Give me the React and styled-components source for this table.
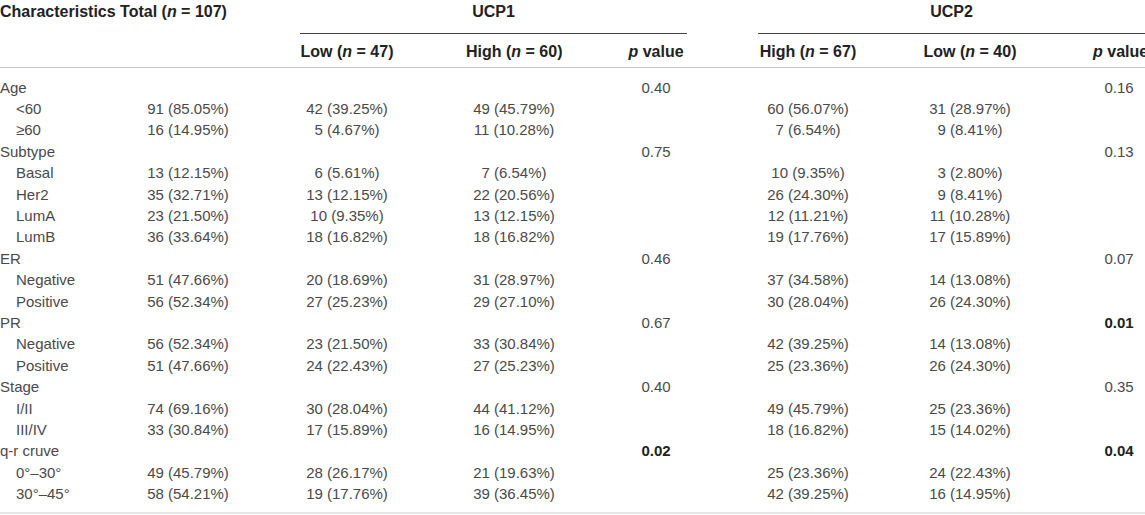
import React from "react";
import styled, { createGlobalStyle } from "styled-components";

const GlobalStyle = createGlobalStyle`
  html, body {
    margin: 0;
    padding: 0;
    background: #ffffff;
  }
  body {
    font-family: "Liberation Sans", Arial, Helvetica, sans-serif;
  }
`;

// label | total | gap | low | gap | high | gap | p | gap | high | gap | low | gap | p
const COLUMNS =
  "140px 96px 64px 94px 72px 96px 63px 62px 71px 100px 62px 100px 73px 52px";

const Table = styled.div`
  width: 1145px;
  overflow: hidden;
  color: #4a4a4a;
`;

const HeadRow = styled.div`
  display: grid;
  grid-template-columns: ${COLUMNS};
  height: ${(p) => p.$height}px;
  box-sizing: border-box;
  align-items: ${(p) => (p.$top ? "start" : "center")};
  padding-top: ${(p) => p.$padTop || 0}px;
  border-bottom: ${(p) => (p.$rule ? "1px solid #c9c9c9" : "none")};
`;

const HeadCell = styled.div`
  grid-column: ${(p) => p.$col};
  grid-row: 1;
  font-size: 16px;
  font-weight: 700;
  color: #222;
  line-height: 18px;
  white-space: nowrap;
  text-align: ${(p) => p.$align || "center"};
  padding-top: ${(p) => p.$padTop || 0}px;
  i {
    font-style: italic;
  }
`;

const Group = styled(HeadCell)`
  align-self: stretch;
  padding-top: 3px;
  border-bottom: 1.5px solid #444;
  box-sizing: border-box;
`;

const Body = styled.div`
  padding: 9px 0 7px;
  border-bottom: 2px solid #e6e6e6;
`;

const Row = styled.div`
  display: grid;
  grid-template-columns: ${COLUMNS};
  grid-template-rows: 21.4px;
  align-items: center;
`;

const Cell = styled.div`
  grid-column: ${(p) => p.$col};
  grid-row: 1;
  font-size: 15px;
  line-height: 18px;
  white-space: nowrap;
  text-align: ${(p) => p.$align || "center"};
  padding-left: ${(p) => (p.$indent ? 16 : 0)}px;
  font-weight: ${(p) => (p.$bold ? 700 : 400)};
  color: ${(p) => (p.$bold ? "#222" : "inherit")};
`;

const rows = [
  { label: "Age", p1: "0.40", p2: "0.16" },
  { label: "<60", v: ["91 (85.05%)", "42 (39.25%)", "49 (45.79%)", "60 (56.07%)", "31 (28.97%)"] },
  { label: "≥60", v: ["16 (14.95%)", "5 (4.67%)", "11 (10.28%)", "7 (6.54%)", "9 (8.41%)"] },
  { label: "Subtype", p1: "0.75", p2: "0.13" },
  { label: "Basal", v: ["13 (12.15%)", "6 (5.61%)", "7 (6.54%)", "10 (9.35%)", "3 (2.80%)"] },
  { label: "Her2", v: ["35 (32.71%)", "13 (12.15%)", "22 (20.56%)", "26 (24.30%)", "9 (8.41%)"] },
  { label: "LumA", v: ["23 (21.50%)", "10 (9.35%)", "13 (12.15%)", "12 (11.21%)", "11 (10.28%)"] },
  { label: "LumB", v: ["36 (33.64%)", "18 (16.82%)", "18 (16.82%)", "19 (17.76%)", "17 (15.89%)"] },
  { label: "ER", p1: "0.46", p2: "0.07" },
  { label: "Negative", v: ["51 (47.66%)", "20 (18.69%)", "31 (28.97%)", "37 (34.58%)", "14 (13.08%)"] },
  { label: "Positive", v: ["56 (52.34%)", "27 (25.23%)", "29 (27.10%)", "30 (28.04%)", "26 (24.30%)"] },
  { label: "PR", p1: "0.67", p2: "0.01", b2: true },
  { label: "Negative", v: ["56 (52.34%)", "23 (21.50%)", "33 (30.84%)", "42 (39.25%)", "14 (13.08%)"] },
  { label: "Positive", v: ["51 (47.66%)", "24 (22.43%)", "27 (25.23%)", "25 (23.36%)", "26 (24.30%)"] },
  { label: "Stage", p1: "0.40", p2: "0.35" },
  { label: "I/II", v: ["74 (69.16%)", "30 (28.04%)", "44 (41.12%)", "49 (45.79%)", "25 (23.36%)"] },
  { label: "III/IV", v: ["33 (30.84%)", "17 (15.89%)", "16 (14.95%)", "18 (16.82%)", "15 (14.02%)"] },
  { label: "q-r cruve", p1: "0.02", p2: "0.04", b1: true, b2: true },
  { label: "0°–30°", v: ["49 (45.79%)", "28 (26.17%)", "21 (19.63%)", "25 (23.36%)", "24 (22.43%)"] },
  { label: "30°–45°", v: ["58 (54.21%)", "19 (17.76%)", "39 (36.45%)", "42 (39.25%)", "16 (14.95%)"] },
];

// grid columns for total, UCP1 low, UCP1 high, UCP2 high, UCP2 low
const valueCols = [2, 4, 6, 10, 12];

export default function App() {
  return (
    <Table>
      <GlobalStyle />
      <HeadRow $height={34} $top>
        <HeadCell $col="1 / 4" $align="left" $padTop={3}>
          Characteristics Total (<i>n</i> = 107)
        </HeadCell>
        <Group $col="4 / 9">UCP1</Group>
        <Group $col="10 / 15">UCP2</Group>
      </HeadRow>
      <HeadRow $height={34} $padTop={3} $rule>
        <HeadCell $col={4}>
          Low (<i>n</i> = 47)
        </HeadCell>
        <HeadCell $col={6}>
          High (<i>n</i> = 60)
        </HeadCell>
        <HeadCell $col={8}>
          <i>p</i> value
        </HeadCell>
        <HeadCell $col={10}>
          High (<i>n</i> = 67)
        </HeadCell>
        <HeadCell $col={12}>
          Low (<i>n</i> = 40)
        </HeadCell>
        <HeadCell $col={14} $align="left">
          <i>p</i> value
        </HeadCell>
      </HeadRow>
      <Body>
        {rows.map((r, i) => (
          <Row key={i}>
            <Cell $col={1} $align="left" $indent={!!r.v}>
              {r.label}
            </Cell>
            {r.v &&
              r.v.map((val, j) => (
                <Cell key={j} $col={valueCols[j]}>
                  {val}
                </Cell>
              ))}
            {r.p1 && (
              <Cell $col={8} $bold={r.b1}>
                {r.p1}
              </Cell>
            )}
            {r.p2 && (
              <Cell $col={14} $bold={r.b2}>
                {r.p2}
              </Cell>
            )}
          </Row>
        ))}
      </Body>
    </Table>
  );
}
